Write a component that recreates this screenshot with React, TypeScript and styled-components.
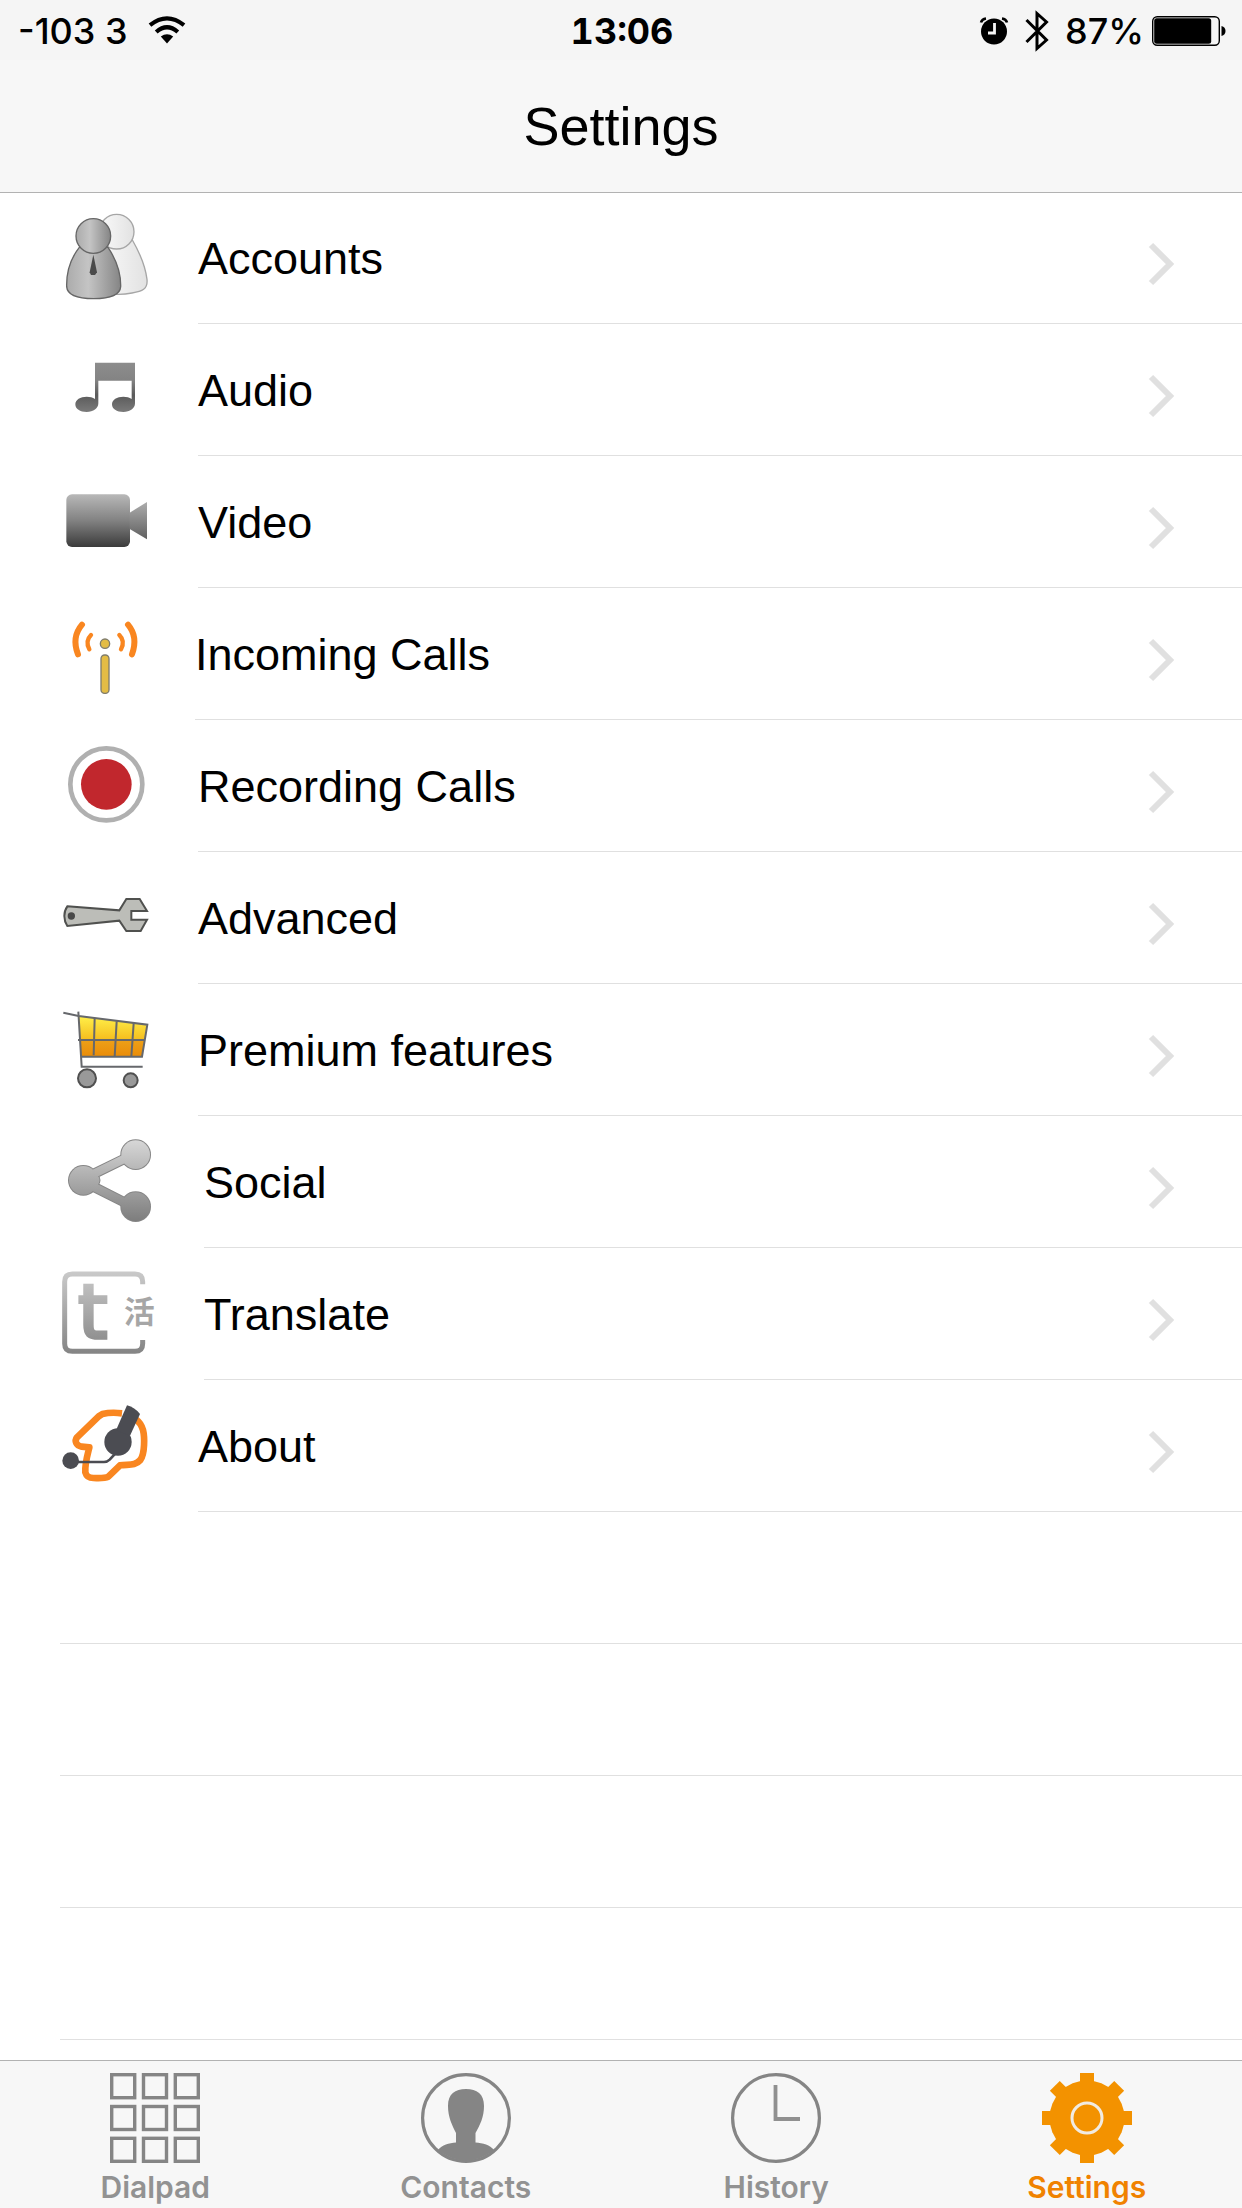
import type { ReactNode } from "react";
import styled, { createGlobalStyle } from "styled-components";

const GlobalStyle = createGlobalStyle`
  * {
    box-sizing: border-box;
  }

  body {
    margin: 0;
    background-color: #ffffff;
    color: #000000;
    font-family: "Liberation Sans", Arial, sans-serif;
  }

  ul {
    list-style: none;
    margin: 0;
    padding: 0;
  }

  svg {
    display: block;
    flex: none;
  }
`;

const Screen = styled.div`
  min-height: 100vh;
  display: flex;
  flex-direction: column;
`;

const StatusBar = styled.div`
  height: 60px;
  padding: 2px 16px 0 18px;
  background-color: #f5f5f5;
  font-family: Inter, sans-serif;
  font-size: 36px;
  line-height: 58px;
  font-weight: 500;

  display: grid;
  grid-template-columns: 1fr auto 1fr;
`;

const StatusGroup = styled.div<{ $end?: boolean }>`
  display: flex;
  align-items: center;
  justify-content: ${(p) => (p.$end ? "flex-end" : "flex-start")};
  gap: ${(p) => (p.$end ? "8px" : "20px")};
`;

const StatusIcons = styled.div`
  display: flex;
  align-items: center;
  gap: 16px;
  margin-right: 8px;
`;

const Clock = styled.time`
  font-weight: 700;
  font-variant-numeric: tabular-nums;
`;

const TitleBar = styled.header`
  height: 132px;
  background-color: #f7f7f7;
  box-shadow: 0 1px 0 #b2b2b2;
  display: flex;
  align-items: center;
  justify-content: center;

  & h1 {
    margin: 0;
    font-size: 54px;
    font-weight: 400;
    line-height: 64px;
  }
`;

const SettingsRow = styled.a`
  height: 132px;
  padding-left: 60px;
  display: flex;
  color: inherit;
  text-decoration: none;
`;

const IconSlot = styled.div<{ $width: number }>`
  width: ${(p) => p.$width}px;
  padding-top: 16px;
`;

const RowBody = styled.div`
  flex: 1;
  padding: 2px 67px 0 0;
  border-bottom: 1px solid #e0e0e0;
  display: flex;
  align-items: center;
  justify-content: space-between;
  font-size: 45px;
  line-height: 52px;
`;

const Chevron = styled.svg`
  width: 27px;
  height: 44px;
  margin-top: 10px;
`;

const EmptyRow = styled.li`
  height: 132px;
  margin-left: 60px;
  border-bottom: 1px solid #e0e0e0;
`;

const TabBar = styled.nav`
  height: 148px;
  margin-top: auto;
  background-color: #f7f7f7;
  border-top: 1px solid #b2b2b2;

  display: grid;
  grid-template-columns: repeat(4, 1fr);
`;

const Tab = styled.a<{ $active?: boolean }>`
  padding-top: 12px;
  display: flex;
  flex-direction: column;
  align-items: center;
  gap: 6px;
  color: ${(p) => (p.$active ? "#f08200" : "#929292")};
  text-decoration: none;
  font-family: Inter, sans-serif;
  font-size: 30px;
  line-height: 36px;
  font-weight: 600;
`;

const RowIcon = ({ y, children }: { y: number; children: ReactNode }) => (
  <svg width="96" height="100" viewBox={`60 ${y} 288 300`} aria-hidden="true">
    {children}
  </svg>
);

const AccountsIcon = () => (
  <RowIcon y={54}>
    <defs>
      <linearGradient id="man" x1="0" x2="1">
        <stop offset="0" stopColor="#ababab" />
        <stop offset="0.4" stopColor="#c4c4c4" />
        <stop offset="1" stopColor="#858585" />
      </linearGradient>
      <linearGradient id="manBack" x1="0" x2="1">
        <stop offset="0" stopColor="#fafafa" />
        <stop offset="1" stopColor="#e2e2e2" />
      </linearGradient>
    </defs>
    <g fill="url(#manBack)" stroke="#a6a6a6" strokeWidth="4">
      <path d="M180 150H277C300 190 316 228 321 268C324 298 306 304 276 309C256 313 236 314 216 312Z" />
      <circle cx="230" cy="125" r="52" />
    </g>
    <g fill="url(#man)" stroke="#666666" strokeWidth="4">
      <path d="M118 172C92 205 79 245 80 290C82 318 120 326 161 326C204 326 240 318 242 290C243 246 228 208 204 172Z" />
      <circle cx="160" cy="138" r="52" />
    </g>
    <path d="M160 194L171 247L165 255H153L149 247Z" fill="#4a4a4a" />
  </RowIcon>
);

const AudioIcon = () => (
  <RowIcon y={450}>
    <defs>
      <linearGradient id="note" gradientUnits="userSpaceOnUse" x1="0" y1="517" x2="0" y2="668">
        <stop offset="0" stopColor="#8d8d8d" />
        <stop offset="0.36" stopColor="#838383" />
        <stop offset="0.65" stopColor="#5a5a5a" />
        <stop offset="1" stopColor="#7c7c7c" />
      </linearGradient>
    </defs>
    <path
      d="M165 518H285V640C285 656 270 666 250 666C230 666 216 657 216 643C216 629 231 620 250 620C260 620 268 622 275 627V572H175V640C175 656 160 666 140 666C120 666 106 657 106 643C106 629 121 620 140 620C150 620 158 622 165 627Z"
      fill="url(#note)"
    />
  </RowIcon>
);

const VideoIcon = () => (
  <RowIcon y={66}>
    <defs>
      <linearGradient id="camera" gradientUnits="userSpaceOnUse" x1="0" y1="133" x2="0" y2="290">
        <stop offset="0" stopColor="#b8b8b8" />
        <stop offset="0.5" stopColor="#828282" />
        <stop offset="1" stopColor="#3c3c3c" />
      </linearGradient>
      <linearGradient id="lens" x1="0" y1="0" x2="0" y2="1">
        <stop offset="0" stopColor="#adadad" />
        <stop offset="1" stopColor="#606060" />
      </linearGradient>
    </defs>
    <rect x="79" y="133" width="191" height="158" rx="17" fill="url(#camera)" />
    <path d="M269 188L321 156V268L269 237Z" fill="url(#lens)" />
  </RowIcon>
);

const IncomingIcon = () => (
  <RowIcon y={462}>
    <g fill="none" stroke="#f98620" strokeLinecap="round">
      <path d="M126 524C104 550 101 580 114 613" strokeWidth="18" />
      <path d="M153 555C140 568 140 583 148 598" strokeWidth="13" />
      <path d="M264 524C286 550 288 580 276 613" strokeWidth="18" />
      <path d="M238 555C251 568 251 583 243 598" strokeWidth="13" />
    </g>
    <g fill="#e3bc45" stroke="#7f7c6c" strokeWidth="4">
      <circle cx="195" cy="581" r="14" />
      <rect x="183" y="615" width="24" height="115" rx="11" />
    </g>
  </RowIcon>
);

const RecordingIcon = () => (
  <RowIcon y={78}>
    <circle cx="199" cy="223" r="108" fill="#ffffff" stroke="#b0b0b0" strokeWidth="14" />
    <circle cx="199" cy="223" r="76" fill="#c1272d" />
  </RowIcon>
);

const AdvancedIcon = () => (
  <RowIcon y={474}>
    <path
      d="M82 589L238 601L259 567H299L321 603H274V629H321L302 663H259L238 632L82 648C70 630 70 606 82 589Z"
      fill="#bcbdb8"
      stroke="#50514f"
      strokeWidth="6"
    />
    <circle cx="94" cy="618" r="11" fill="#484848" />
  </RowIcon>
);

const PremiumIcon = () => (
  <RowIcon y={90}>
    <defs>
      <linearGradient id="goods" x1="0" y1="0" x2="0" y2="1">
        <stop offset="0" stopColor="#fff04a" />
        <stop offset="0.58" stopColor="#f5be1e" />
        <stop offset="0.6" stopColor="#eda018" />
        <stop offset="1" stopColor="#ea8c08" />
      </linearGradient>
    </defs>
    <path d="M116 138L321 164L306 259H123Z" fill="url(#goods)" />
    <g fill="none" stroke="#66686c" strokeWidth="6">
      <path d="M70 128L116 138L322 164L306 260H123" />
      <path d="M115 125L125 290H308" />
      <path d="M164 145L161 256M230 154L224 260M281 160L274 260M114 210H312" />
    </g>
    <g fill="#999999" stroke="#505050" strokeWidth="6">
      <circle cx="141" cy="325" r="27" />
      <circle cx="272" cy="331" r="21" />
    </g>
  </RowIcon>
);

const SocialIcon = () => (
  <RowIcon y={486}>
    <defs>
      <linearGradient id="share" gradientUnits="userSpaceOnUse" x1="0" y1="508" x2="0" y2="756">
        <stop offset="0" stopColor="#d8d8d8" />
        <stop offset="1" stopColor="#7c7c7c" />
      </linearGradient>
    </defs>
    <g fill="#858585">
      <circle cx="130" cy="631" r="46" />
      <circle cx="287" cy="554" r="46" />
      <circle cx="287" cy="710" r="46" />
    </g>
    <path d="M287 550L148 618C172 624 172 638 148 644L287 714" fill="none" stroke="#858585" strokeWidth="31" />
    <path d="M287 550L148 618C172 624 172 638 148 644L287 714" fill="none" stroke="url(#share)" strokeWidth="25" />
    <g fill="url(#share)">
      <circle cx="130" cy="631" r="43" />
      <circle cx="287" cy="554" r="43" />
      <circle cx="287" cy="710" r="43" />
    </g>
  </RowIcon>
);

const TranslateIcon = () => (
  <RowIcon y={102}>
    <defs>
      <linearGradient id="translate" gradientUnits="userSpaceOnUse" x1="0" y1="124" x2="0" y2="372">
        <stop offset="0" stopColor="#cacaca" />
        <stop offset="1" stopColor="#848484" />
      </linearGradient>
    </defs>
    <path
      d="M308 163V155Q308 132 285 132H97Q74 132 74 155V341Q74 364 97 364H285Q308 364 308 341V330"
      fill="none"
      stroke="url(#translate)"
      strokeWidth="15"
    />
    <text
      x="115"
      y="323"
      fill="url(#translate)"
      stroke="url(#translate)"
      strokeWidth="11"
      fontFamily="DejaVu Sans, sans-serif"
      fontSize="222"
    >
      t
    </text>
    <text x="252" y="278" fill="#a6a6a6" fontFamily="Noto Sans CJK SC, sans-serif" fontWeight="700" fontSize="92">
      活
    </text>
  </RowIcon>
);

const AboutIcon = () => (
  <RowIcon y={498}>
    <path
      d="M246 550C222 547 200 549 187 552L176 559L111 622C103 633 108 647 125 650L148 652C141 680 134 704 136 727C140 741 148 744 160 744C176 744 192 746 205 740L240 706C264 702 285 709 301 690C315 671 314 620 309 600C304 584 297 575 287 568"
      fill="none"
      stroke="#f98620"
      strokeWidth="20"
      strokeLinejoin="round"
    />
    <path d="M92 696H192Q202 696 209 689L232 664" fill="none" stroke="#4b4c52" strokeWidth="8" />
    <g fill="#4b4c52">
      <circle cx="92" cy="692" r="25" />
      <circle cx="234" cy="636" r="41" />
      <path d="M261 526Q284 532 300 552L270 617L228 601Z" />
    </g>
  </RowIcon>
);

const settings = [
  { label: "Accounts", inset: 138, icon: <AccountsIcon /> },
  { label: "Audio", inset: 138, icon: <AudioIcon /> },
  { label: "Video", inset: 138, icon: <VideoIcon /> },
  { label: "Incoming Calls", inset: 135, icon: <IncomingIcon /> },
  { label: "Recording Calls", inset: 138, icon: <RecordingIcon /> },
  { label: "Advanced", inset: 138, icon: <AdvancedIcon /> },
  { label: "Premium features", inset: 138, icon: <PremiumIcon /> },
  { label: "Social", inset: 144, icon: <SocialIcon /> },
  { label: "Translate", inset: 144, icon: <TranslateIcon /> },
  { label: "About", inset: 138, icon: <AboutIcon /> },
];

const TabIcon = ({ children }: { children: ReactNode }) => (
  <svg width="90" height="90" viewBox="0 0 90 90" aria-hidden="true">
    {children}
  </svg>
);

const cells = [1.7, 33.5, 65.3];

const DialpadIcon = () => (
  <TabIcon>
    {cells.map((y) =>
      cells.map((x) => (
        <rect key={`${x}-${y}`} x={x} y={y} width="23" height="23" fill="none" stroke="#858585" strokeWidth="3.4" />
      ))
    )}
  </TabIcon>
);

const ContactsIcon = () => (
  <TabIcon>
    <circle cx="45" cy="45" r="43.4" fill="none" stroke="#858585" strokeWidth="3.2" />
    <path
      d="M45 16C56 16 63 21 63 33C63 44 59 52 54.5 60V69.5C62 70 69 72 73 77A43 43 0 0 1 17 77C21 72 28 70 35 69.5V60C31 52 27 44 27 33C27 21 34 16 45 16Z"
      fill="#858585"
    />
  </TabIcon>
);

const HistoryIcon = () => (
  <TabIcon>
    <circle cx="45" cy="45" r="43.4" fill="none" stroke="#858585" strokeWidth="3.2" />
    <path d="M44.5 12V46H69" fill="none" stroke="#909090" strokeWidth="3.8" />
  </TabIcon>
);

const GearIcon = () => (
  <TabIcon>
    <g fill="#f39200">
      <circle cx="45" cy="45" r="37.5" />
      {[0, 45, 90, 135].map((angle) => (
        <rect key={angle} x="38" y="-0.5" width="14" height="91" transform={`rotate(${angle} 45 45)`} />
      ))}
    </g>
    <circle cx="45" cy="45" r="15" fill="none" stroke="#f1ebe2" strokeWidth="3" />
  </TabIcon>
);

const tabs = [
  { label: "Dialpad", icon: <DialpadIcon /> },
  { label: "Contacts", icon: <ContactsIcon /> },
  { label: "History", icon: <HistoryIcon /> },
  { label: "Settings", icon: <GearIcon />, active: true },
];

const WifiIcon = () => (
  <svg width="38" height="30" viewBox="0 0 38 30" aria-label="Wi-Fi">
    <path d="M19 27.5L12.8 20.5Q19 15.8 25.2 20.5Z" />
    <g fill="none" stroke="#000000" strokeWidth="4.2">
      <path d="M8.2 16Q19 6.6 29.8 16" />
      <path d="M2 9.2Q19 -4.4 36 9.2" />
    </g>
  </svg>
);

const AlarmIcon = () => (
  <svg width="30" height="28" viewBox="0 0 30 28" aria-label="Alarm">
    <circle cx="15" cy="14.5" r="13" />
    <path d="M2 5.5Q3 2 7 1.5M28 5.5Q27 2 23 1.5" fill="none" stroke="#000000" strokeWidth="2.6" />
    <path d="M15.5 6V16H9" fill="none" stroke="#f5f5f5" strokeWidth="2.8" />
  </svg>
);

const BluetoothIcon = () => (
  <svg width="24" height="42" viewBox="0 0 24 42" aria-label="Bluetooth">
    <path d="M1.5 10L21.5 30L12 38.5V3.5L21.5 12L1.5 32" fill="none" stroke="#000000" strokeWidth="3" />
  </svg>
);

const BatteryIcon = () => (
  <svg width="74" height="30" viewBox="0 0 74 30" aria-label="Battery">
    <rect x="0.7" y="0.7" width="66.6" height="28.6" rx="4.5" fill="none" stroke="#000000" strokeWidth="1.4" />
    <rect x="2.2" y="2.2" width="57" height="25.6" rx="2.5" />
    <path d="M69.5 10Q73.5 11 73.5 15T69.5 20Z" />
  </svg>
);

const App = () => {
  return (
    <Screen>
      <GlobalStyle />
      <StatusBar>
        <StatusGroup>
          <span>-103 3</span>
          <WifiIcon />
        </StatusGroup>
        <Clock>13:06</Clock>
        <StatusGroup $end>
          <StatusIcons>
            <AlarmIcon />
            <BluetoothIcon />
          </StatusIcons>
          <span>87%</span>
          <BatteryIcon />
        </StatusGroup>
      </StatusBar>
      <TitleBar>
        <h1>Settings</h1>
      </TitleBar>
      <main>
        <ul>
          {settings.map((x) => (
            <li key={x.label}>
              <SettingsRow href={`#${x.label.toLowerCase().replace(" ", "-")}`}>
                <IconSlot $width={x.inset}>{x.icon}</IconSlot>
                <RowBody>
                  <span>{x.label}</span>
                  <Chevron viewBox="0 0 27 44" aria-hidden="true">
                    <path d="M3 3L22 22L3 41" fill="none" stroke="#e0e0e0" strokeWidth="6" />
                  </Chevron>
                </RowBody>
              </SettingsRow>
            </li>
          ))}
          {[1, 2, 3, 4].map((n) => (
            <EmptyRow key={n} aria-hidden="true" />
          ))}
        </ul>
      </main>
      <TabBar>
        {tabs.map((x) => (
          <Tab key={x.label} href={`#${x.label.toLowerCase()}`} $active={x.active}>
            {x.icon}
            <span>{x.label}</span>
          </Tab>
        ))}
      </TabBar>
    </Screen>
  );
};

export default App;
